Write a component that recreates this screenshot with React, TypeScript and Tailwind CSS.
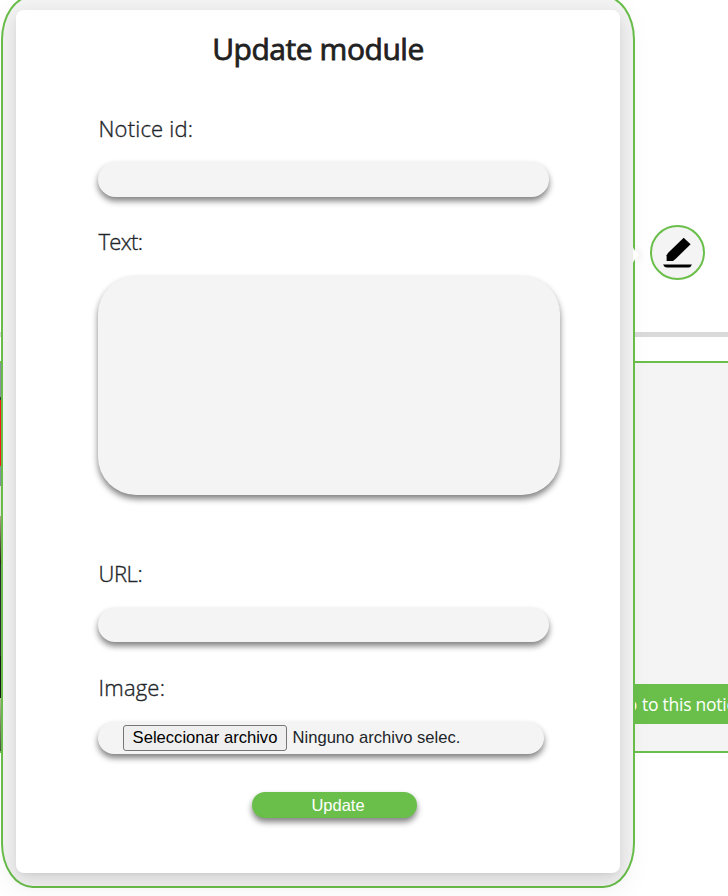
import type { ReactNode } from "react";

const field = "bg-[#f4f4f4] shadow-[0_4px_6px_#808080] outline-none";

function Label({ children, className }: { children: ReactNode; className: string }) {
  return (
    <div className={`pl-[0.5px] whitespace-nowrap text-[22px] font-light leading-[30px] text-[#212529] [-webkit-text-stroke:0.35px_#212529] ${className}`}>
      {children}
    </div>
  );
}

function NoticePage() {
  return (
    <div className="flex h-[896px] w-[728px] flex-col overflow-hidden">
      <header className="flex h-[332px] justify-end pr-[23px] pt-[225px]">
        <button className="flex size-[55px] items-center justify-center rounded-full border-2 border-[#6abf4b] bg-[#f4f4f4]">
          <svg width="31" height="33" viewBox="0 0 31 33" fill="#000">
            <path d="M21.7 1.7 28.6 8.3 13.5 23 11 24.9H4.6V19.3L6.2 16.8Z" />
            <path d="M1 28.4H29.9Q28.6 31.6 26.8 31.6H4.9Q2.5 31.6 1 28.4Z" />
          </svg>
        </button>
      </header>
      <div className="h-[5px] shrink-0 bg-[#dadada]" />
      <article className="mt-6 flex h-[392px] shrink-0 border-y-2 border-[#6abf4b] bg-[#f4f4f4]">
        <div className="flex w-px shrink-0 flex-col">
          <div className="h-[34px] bg-[#8a92a0]" />
          <div className="h-[3px] bg-[#34382f]" />
          <div className="h-[66px] bg-[#f51b12]" />
          <div className="h-5 bg-[#8792a0]" />
          <div className="h-[30px] bg-[#e8e6e1]" />
          <div className="h-12 bg-gradient-to-b from-[#b3a28e] to-[#281d17]" />
          <div className="h-[92px] bg-[#292a2d]" />
          <div className="h-[42px] bg-[#171817]" />
          <div className="grow bg-gradient-to-b from-[#bdbd99] to-[#48503d]" />
        </div>
        <div className="flex min-w-0 grow flex-col pt-[321px]">
          <a className="flex h-10 items-center whitespace-nowrap bg-[#6abf4b] pl-[613px] text-[17.5px] tracking-[-0.25px] text-white">
            <span className="flex w-7 shrink-0 justify-end pr-[5px]">Go</span>
            <span>to this notice</span>
          </a>
        </div>
      </article>
    </div>
  );
}

export default function App() {
  return (
    <main className="relative h-[896px] w-[728px] overflow-hidden bg-white font-['Open_Sans','Noto_Sans',sans-serif]">
      <NoticePage />
      <div className="absolute left-px top-[-5px] h-[893px] w-[634px] rounded-[5%] border-2 border-[#6abf4b] bg-[#f4f4f4] p-[13px]">
        <section className="h-full w-full rounded-lg bg-white pl-[82px] pt-[22px] shadow-[0_6px_16px_0_rgba(0,0,0,0.08),0_3px_6px_-4px_rgba(0,0,0,0.12),0_9px_28px_8px_rgba(0,0,0,0.05)]">
          <h1 className="-ml-[82px] h-[41px] whitespace-nowrap text-center text-[30px] font-normal leading-[34px] tracking-[-0.45px] text-[#212121] [-webkit-text-stroke:0.8px_#212121]">
            Update module
          </h1>
          <form className="flex flex-col items-start">
            <Label className="mt-10 tracking-[0.2px]">Notice id:</Label>
            <input className={`mt-[19px] h-[35px] w-[451px] rounded-[18px] ${field}`} />
            <Label className="mt-[29px] tracking-[-0.7px]">Text:</Label>
            <textarea className={`mt-5 h-[219px] w-[462px] resize-none rounded-[38px] ${field}`} />
            <Label className="mt-[63px] tracking-[-0.4px]">URL:</Label>
            <input className={`mt-5 h-[34px] w-[451px] rounded-[17px] ${field}`} />
            <Label className="mt-[30px] tracking-[0.2px]">Image:</Label>
            <div className={`mt-5 flex h-8 w-[446px] items-center rounded-2xl pl-[25px] font-['Liberation_Sans',Arial,sans-serif] text-[16.6px] ${field}`}>
              <button type="button" className="flex h-[26px] w-[164px] items-start justify-center whitespace-nowrap rounded-[3px] border border-[#767676] bg-[#efefef] pt-px leading-[22px] text-black">
                Seleccionar archivo
              </button>
              <span className="ml-[5.5px] text-[#212529]">Ninguno archivo selec.</span>
            </div>
            <button type="button" className="ml-[154px] mt-[38px] h-[26px] w-[165px] rounded-[13px] bg-[#6abf4b] pl-[7px] font-['Liberation_Sans',Arial,sans-serif] text-[16.5px] leading-[26px] text-white shadow-[0_4px_6px_#808080]">
              Update
            </button>
          </form>
        </section>
      </div>
      <svg className="absolute left-[632px] top-[244px] drop-shadow-[2px_0_3px_rgba(0,0,0,0.08)]" width="10" height="22" viewBox="0 0 10 22">
        <path d="M1 3Q1.3 4.5 2.5 6L6.5 10Q7.5 11 6.5 12L2.5 16Q1.3 17.5 1 19Z" fill="white" />
      </svg>
    </main>
  );
}
